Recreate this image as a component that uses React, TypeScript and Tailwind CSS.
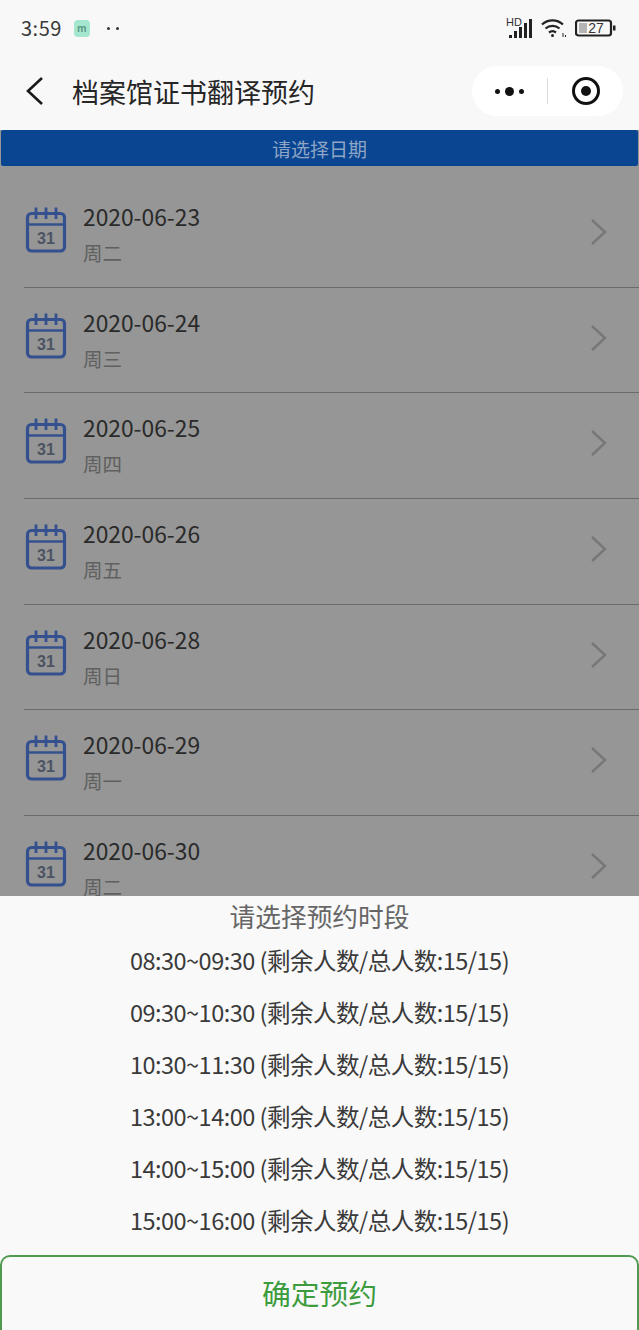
const font = "font-['Noto_Sans_CJK_SC','Noto_Sans',sans-serif]";

const dates = [
  { date: "2020-06-23", day: "周二" },
  { date: "2020-06-24", day: "周三" },
  { date: "2020-06-25", day: "周四" },
  { date: "2020-06-26", day: "周五" },
  { date: "2020-06-28", day: "周日" },
  { date: "2020-06-29", day: "周一" },
  { date: "2020-06-30", day: "周二" },
];

const slots = [
  "08:30~09:30",
  "09:30~10:30",
  "10:30~11:30",
  "13:00~14:00",
  "14:00~15:00",
  "15:00~16:00",
];

function CalendarIcon() {
  return (
    <svg width="42" height="48" viewBox="0 0 42 48" className="shrink-0">
      <rect x="2.5" y="7.5" width="37" height="37.500" rx="4" fill="none" stroke="#34508f" strokeWidth="3.200" />
      <path d="M2.5 18.500H39.500" stroke="#34508f" strokeWidth="2.600" />
      <path d="M11 1.500V13M21 1.500V13M31 1.500V13" stroke="#34508f" strokeWidth="2.800" />
      <text x="21" y="38" textAnchor="middle" fontSize="16" fontWeight="700" fill="#4c5362" fontFamily="Liberation Sans, sans-serif">
        31
      </text>
    </svg>
  );
}

function StatusIcons() {
  return (
    <div className="flex items-center gap-[9px]">
      <svg width="26" height="22" viewBox="0 0 26 22">
        <text x="0" y="9" fontSize="11" fontWeight="400" fill="#333" fontFamily="Liberation Sans, sans-serif">HD</text>
        <path d="M3 18h3v3H3zM8 14h3v7H8zM13 10h3v11H13zM18 6h3v15H18zM23 2h3v19H23z" fill="#222" />
      </svg>
      <svg width="25" height="20" viewBox="0 0 25 20" fill="none" stroke="#222" strokeWidth="2.200">
        <path d="M1 6.500C7 1 16 1 22 6.500" />
        <path d="M4.500 10.500C8.500 7 14.500 7 18.500 10.500" />
        <path d="M8 14.500C10 13 13 13 15 14.500" />
        <circle cx="11.500" cy="17.500" r="1.500" fill="#222" stroke="none" />
        <path d="M22 15v4M24.500 17v2" strokeWidth="1" />
      </svg>
      <svg width="41" height="18" viewBox="0 0 41 18">
        <rect x="1" y="1.500" width="35" height="15" rx="2.500" fill="none" stroke="#222" strokeWidth="2.200" />
        <rect x="4" y="4" width="8" height="10" fill="#b5b5b5" />
        <path d="M38 6.500h2.500v5H38z" fill="#222" />
        <text x="21" y="14" textAnchor="middle" fontSize="14" fill="#333" fontFamily="Liberation Sans, sans-serif">27</text>
      </svg>
    </div>
  );
}

export default function App() {
  return (
    <div className={`flex h-[1330px] w-[639px] flex-col overflow-hidden bg-[#f8f8f8] ${font}`}>
      {/* Status bar */}
      <div className="flex h-[56px] shrink-0 items-center justify-between pl-[21px] pr-[23px]">
        <div className="flex items-center">
          <span className="text-[20px] leading-none tracking-[0.5px] text-[#3a3a3a]">3:59</span>
          <div className="ml-[12px] flex h-[17px] w-[16px] items-center justify-center rounded-[4px] bg-[#a5e6cf] text-[10px] font-bold leading-none text-[#5b9c88]">
            m
          </div>
          <div className="ml-[17px] flex gap-[6px]">
            <span className="h-[3px] w-[3px] rounded-full bg-[#333]" />
            <span className="h-[3px] w-[3px] rounded-full bg-[#333]" />
          </div>
        </div>
        <StatusIcons />
      </div>

      {/* Nav */}
      <div className="flex h-[74px] shrink-0 items-center pl-[24px] pr-[16px] pb-[4px]">
        <svg width="22" height="30" viewBox="0 0 22 30" fill="none" stroke="#1a1a1a" strokeWidth="2.600" className="shrink-0">
          <path d="M18 2L4 15L18 28" />
        </svg>
        <span className="ml-[26px] text-[27px] leading-none text-[#262626]">档案馆证书翻译预约</span>
        <div className="ml-auto flex h-[50px] w-[151px] items-center rounded-full bg-white">
          <div className="flex w-[75px] items-center justify-center gap-[5px]">
            <span className="h-[5px] w-[5px] rounded-full bg-[#111]" />
            <span className="h-[9px] w-[9px] rounded-full bg-[#111]" />
            <span className="h-[5px] w-[5px] rounded-full bg-[#111]" />
          </div>
          <div className="h-[26px] w-px bg-[#dcdcdc]" />
          <div className="flex flex-1 items-center justify-center">
            <div className="flex h-[28px] w-[28px] items-center justify-center rounded-full border-[3px] border-[#111]">
              <span className="h-[10px] w-[10px] rounded-full bg-[#111]" />
            </div>
          </div>
        </div>
      </div>

      {/* Dimmed page */}
      <div className="flex h-[766px] shrink-0 flex-col overflow-hidden bg-[#969696]">
        <div className="mx-[1px] flex h-[36px] shrink-0 items-center justify-center rounded-[2px] bg-[#0a4592] pt-[1px] text-[19px] leading-none text-[#8ea5c6]">
          请选择日期
        </div>
        <div className="mt-[16px] flex flex-col">
          {dates.map((item, i) => (
            <div key={i} className="ml-[24px] flex h-[105.67px] shrink-0 items-start border-b border-[#6a6a6a] pl-[1px] pr-[31px] pt-[21px]">
              <div className="mt-[3px]">
                <CalendarIcon />
              </div>
              <div className="ml-[16px] flex flex-col">
                <span className="text-[22.800px] leading-[28px] text-[#2a2a2a]">{item.date}</span>
                <span className="mt-[10px] text-[19.500px] leading-[24px] text-[#606060]">{item.day}</span>
              </div>
              <svg width="18" height="28" viewBox="0 0 18 28" fill="none" stroke="#777" strokeWidth="2.400" className="ml-auto mt-[15px]">
                <path d="M2 2L15 14L2 26" />
              </svg>
            </div>
          ))}
        </div>
      </div>

      {/* Time slot sheet */}
      <div className="flex flex-1 flex-col bg-[#f9f9f9]">
        <div className="flex h-[40px] shrink-0 items-center justify-center text-[25.700px] leading-none text-[#666]">
          请选择预约时段
        </div>
        <div className="mt-[-1px] flex flex-col">
          {slots.map((slot) => (
            <div key={slot} className="flex h-[52px] items-center justify-center text-[23.500px] leading-none tracking-[-0.5px] text-[#3a3a3a]">
              {slot} (剩余人数/总人数:15/15)
            </div>
          ))}
        </div>
        <button className="mt-auto flex h-[75px] w-full items-center justify-center rounded-t-[10px] border-2 border-b-0 border-[#4f9a4f] text-[28.800px] leading-none text-[#3d9c3d]">
          确定预约
        </button>
      </div>
    </div>
  );
}
